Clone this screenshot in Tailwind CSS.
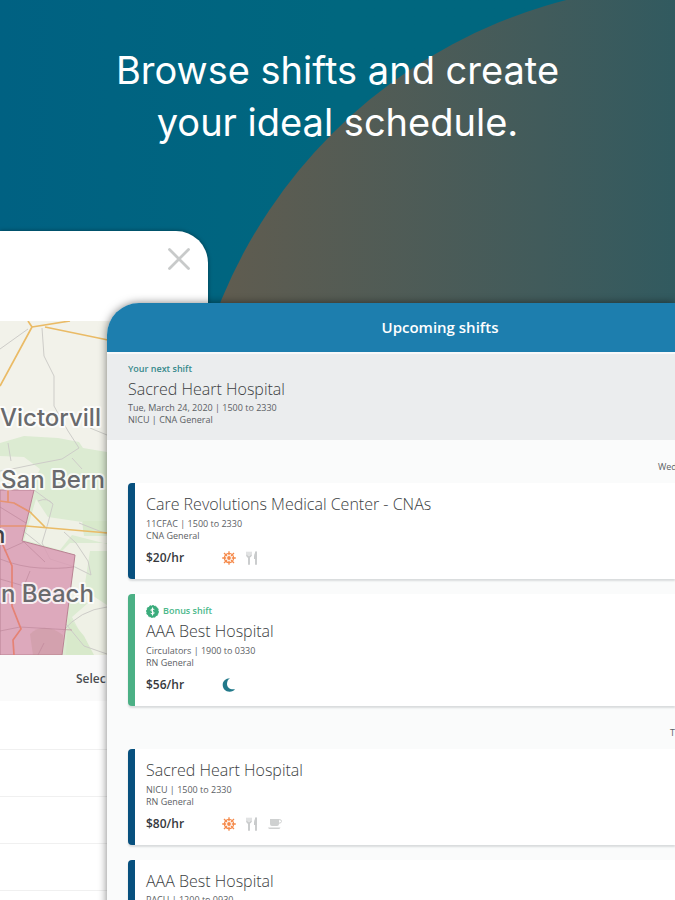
<!DOCTYPE html>
<html lang="en">
<head>
    <meta charset="UTF-8">
    <meta name="viewport" content="width=device-width, initial-scale=1.0">
    <title>Upcoming shifts</title>
    <script src="https://cdn.jsdelivr.net/npm/@tailwindcss/browser@4"></script>
</head>
<body class="font-['Open_Sans',sans-serif]">
    <!-- Shared icons -->
    <svg class="hidden">
        <symbol id="sun" viewBox="0 0 14 14">
            <g fill="none" stroke="#f58a4b" stroke-width="1.3">
                <circle cx="7" cy="7" r="4.6" />
                <path d="M7 .2v4M7 9.800v4M.2 7h4M9.800 7h4M2 2l3 3M9 9l3 3M12 2L9 5M5 9L2 12" />
            </g>
            <circle cx="7" cy="7" r="1.900" fill="#f58a4b" />
        </symbol>
        <symbol id="meal" viewBox="0 0 14 14">
            <g fill="none" stroke="#c9cbcc" stroke-linecap="round">
                <path d="M2 1v3.500M4 1v3.500M6 1v3.500" stroke-width="1.100" />
                <path d="M2 4.500q0 1.500 2 1.500t2-1.500" stroke-width="1.300" />
                <path d="M4 6v7M11 1.200v11.800" stroke-width="1.900" />
            </g>
            <path d="M11.900 .5Q9 1.500 9 5.500v2.500h2.900z" fill="#c9cbcc" />
        </symbol>
        <symbol id="coffee" viewBox="0 0 14 14">
            <path d="M2 2h9v5q0 2-2 2h-5q-2 0-2-2zM0 10.500h12.500q-.5 1.500-2 1.500h-8.500q-1.500 0-2-1.500z" fill="#cfd1d1" />
            <path d="M11 2.700h1q1.500 0 1.500 1.700t-2.500 1.800" fill="none" stroke="#cfd1d1" />
        </symbol>
        <symbol id="moon" viewBox="0 0 14 14">
            <path d="M8 .3C3.500 .3 .7 3.300 .7 7S3.500 13.700 7.500 13.700C10 13.700 12 12.700 13 11.200C8 12 5 9.300 5 6C5 3.500 6 1.500 8 .3z" fill="#22798a" />
        </symbol>
    </svg>

    <div class="relative h-screen overflow-hidden bg-linear-to-r from-[#006182] via-[#00677f] to-[#00677f]">
        <div class="absolute -top-4 left-[183px] size-[1020px] rounded-full bg-linear-to-r from-[#635c4e] via-[#2f5a60] to-[#2f5a60]"></div>

        <h1 class="relative h-[303px] pt-11 text-center font-['Inter'] text-[38px] leading-[52px] font-normal text-white">
            Browse shifts and create<br>your ideal schedule.
        </h1>

        <!-- Map window, behind the shift list -->
        <section class="absolute top-[231px] bottom-0 left-0 w-[208px] overflow-hidden rounded-tr-[32px] bg-white shadow-[0_0_4px_rgba(0,0,0,0.4)]">
            <div class="flex h-[90px] items-start justify-end pt-[17px] pr-[18px]">
                <button type="button" aria-label="Close">
                    <svg class="size-[22px]" viewBox="0 0 22 22" fill="none" stroke="#c8caca" stroke-width="2.800" stroke-linecap="round">
                        <path d="M1.500 1.500l19 19M20.500 1.500l-19 19" />
                    </svg>
                </button>
            </div>
            <svg class="block h-[334px] w-full" viewBox="0 0 208 334">
                <rect width="208" height="334" fill="#f2f2ea" />
                <path d="M0 122L24 115L58 117L79 121L83 127L107 131V334H62L75 234L22 220L34 169H0z" fill="#dcebd2" />
                <path d="M0 135L24 136L40 148L30 169H0zM36 178L48 196L82 201L84 215H107V223L72 214L60 229L24 219zM90 230H107V222H70L62 230L75 234L70 276L88 282L72 296L92 334H107V284L84 269z" fill="#eff1e6" />
                <path d="M83 200H107V211H83zM68 296L66 334H94L84 315z" fill="#d8e9cb" />
                <g fill="none" stroke="#cdccc8">
                    <path d="M0 28L28 8M42 7L44 35L54 55V85L68 110L79 127L62 138L36 143L12 148L0 150M8 122L11 140M79 202L107 213M0 88L7 92M90 107L107 114M72 137L82 148" />
                    <path d="M34 169L53 183L48 202L42 222L50 238L75 246L91 254L88 240L76 222L64 211M62 311Q80 289 107 286M38 180Q48 176 53 183M22 209L42 225M66 303L84 325L107 333" />
                </g>
                <path d="M0 169H34L22 220L75 234L62 334H0z" fill="#d99cb4" fill-opacity=".85" stroke="#b98293" />
                <path d="M30 313Q44 300 63 314L62 334H33z" fill="#b98a83" fill-opacity=".25" />
                <g fill="none" stroke="#bb8398" stroke-opacity=".6">
                    <path d="M0 238Q20 246 40 247T73 246M0 258L24 265L30 250M0 310L20 306L72 309M0 186L26 202M4 230L24 221M14 182L32 192M24 221L45 241M38 334L44 322" />
                </g>
                <g fill="none" stroke="#eabb66" stroke-width="1.700">
                    <path d="M28 0L32 6L0 65M32 6L70 0M45 6L108 19M26 205L108 212M30 191L45 206" />
                </g>
                <g fill="none" stroke="#e69372" stroke-width="1.700">
                    <path d="M0 205H26M0 180L14 182L30 191M8 169V181" />
                    <path d="M2 222L12 245V285L21 308L13 319L14 334" stroke="#e58274" />
                </g>
                <g class="font-['Inter']" font-size="24" font-weight="500" fill="#696a6d" stroke="#fffc" stroke-width="4" stroke-linejoin="round" paint-order="stroke">
                    <text x="0" y="105">Victorvill</text>
                    <text x="1" y="167">San Bern</text>
                    <text x="-9" y="222" fill="#3f4145">n</text>
                    <text x="1" y="281">n Beach</text>
                </g>
            </svg>
            <div class="h-[46px] bg-[#fafafa] pl-[76px] text-[12px] leading-[48px] font-semibold text-[#4b4e52]">Selec</div>
            <div class="h-[49px] border-b border-[#f0f0f0]"></div>
            <div class="h-[47px] border-b border-[#f0f0f0]"></div>
            <div class="h-[47px] border-b border-[#f0f0f0]"></div>
            <div class="h-[47px] border-b border-[#f0f0f0]"></div>
        </section>

        <!-- Shift list -->
        <main class="relative ml-[107px] min-h-[640px] overflow-hidden rounded-tl-[32px] bg-[#fafbfb] text-[#5c6064] shadow-[0_0_8px_rgba(0,0,0,0.5)]">
            <h2 class="bg-[#1d7eae] pl-[98px] text-center text-[15px] leading-[49px] font-semibold text-white">Upcoming shifts</h2>

            <section class="border-t-2 border-[#f8f9fa] bg-[#ebedee] pt-[9px] pb-[14px] pl-[21px]">
                <p class="mb-1 text-[9px] leading-[12px] font-semibold text-[#36898b]">Your next shift</p>
                <h3 class="text-[16px] leading-[20px] font-light text-[#3b3e42]">Sacred Heart Hospital</h3>
                <p class="mt-[3px] text-[9px] leading-[12px]">Tue, March 24, 2020 | 1500 to 2330<br>NICU | CNA General</p>
            </section>

            <div class="flex h-[43px] justify-end pt-5 text-[9px] leading-[14px]"><span class="w-[17px] whitespace-nowrap">Wed</span></div>
            <div class="flex flex-col gap-[15px] pl-[21px]">
                <article class="rounded-l border-l-[7px] border-[#07507e] bg-white pt-[11px] pb-[11px] pl-[11px] shadow-[0_2px_2px_#d9dcdd]">
                    <h3 class="text-[16px] leading-[20px] font-light text-[#3b3e42]">Care Revolutions Medical Center - CNAs</h3>
                    <p class="mt-1 text-[9px] leading-[12px]">11CFAC | 1500 to 2330<br>CNA General</p>
                    <div class="mt-[6px] flex h-5 items-center gap-[9px]">
                        <span class="w-[67px] text-[12px] font-semibold text-[#36393d]">$20/hr</span>
                        <svg class="size-[14px]"><use href="#sun" /></svg>
                        <svg class="size-[14px]"><use href="#meal" /></svg>
                    </div>
                </article>
                <article class="rounded-l border-l-[7px] border-[#4bb085] bg-white pt-[11px] pb-[11px] pl-[11px] shadow-[0_2px_2px_#d9dcdd]">
                    <div class="mb-1 flex h-3 items-center gap-1 text-[9px] font-semibold text-[#4bb88a]">
                        <svg class="size-[13px]" viewBox="0 0 13 13">
                            <circle cx="6.500" cy="6.500" r="6" fill="#3bac7c" stroke="#3bac7c" stroke-dasharray="2 1" />
                            <path d="M8.300 4.600Q6.500 3.300 5.200 4.400T6.500 6.500T7.900 8.600T4.700 8.300M6.500 2.500v8" fill="none" stroke="#fff" />
                        </svg>
                        Bonus shift
                    </div>
                    <h3 class="text-[16px] leading-[20px] font-light text-[#3b3e42]">AAA Best Hospital</h3>
                    <p class="mt-1 text-[9px] leading-[12px]">Circulators | 1900 to 0330<br>RN General</p>
                    <div class="mt-[6px] flex h-5 items-center gap-[9px]">
                        <span class="w-[67px] text-[12px] font-semibold text-[#36393d]">$56/hr</span>
                        <svg class="size-[14px]"><use href="#moon" /></svg>
                    </div>
                </article>
            </div>

            <div class="flex h-[43px] justify-end pt-5 text-[9px] leading-[14px]"><span class="w-[5px]">T</span></div>
            <div class="flex flex-col gap-[15px] pl-[21px]">
                <article class="rounded-l border-l-[7px] border-[#07507e] bg-white pt-[11px] pb-[11px] pl-[11px] shadow-[0_2px_2px_#d9dcdd]">
                    <h3 class="text-[16px] leading-[20px] font-light text-[#3b3e42]">Sacred Heart Hospital</h3>
                    <p class="mt-1 text-[9px] leading-[12px]">NICU | 1500 to 2330<br>RN General</p>
                    <div class="mt-[6px] flex h-5 items-center gap-[9px]">
                        <span class="w-[67px] text-[12px] font-semibold text-[#36393d]">$80/hr</span>
                        <svg class="size-[14px]"><use href="#sun" /></svg>
                        <svg class="size-[14px]"><use href="#meal" /></svg>
                        <svg class="size-[14px]"><use href="#coffee" /></svg>
                    </div>
                </article>
                <article class="rounded-l border-l-[7px] border-[#07507e] bg-white pt-[11px] pb-[11px] pl-[11px] shadow-[0_2px_2px_#d9dcdd]">
                    <h3 class="text-[16px] leading-[20px] font-light text-[#3b3e42]">AAA Best Hospital</h3>
                    <p class="mt-[3px] text-[9px] leading-[12px]">PACU | 1200 to 0930</p>
                </article>
            </div>
        </main>
    </div>
</body>
</html>
